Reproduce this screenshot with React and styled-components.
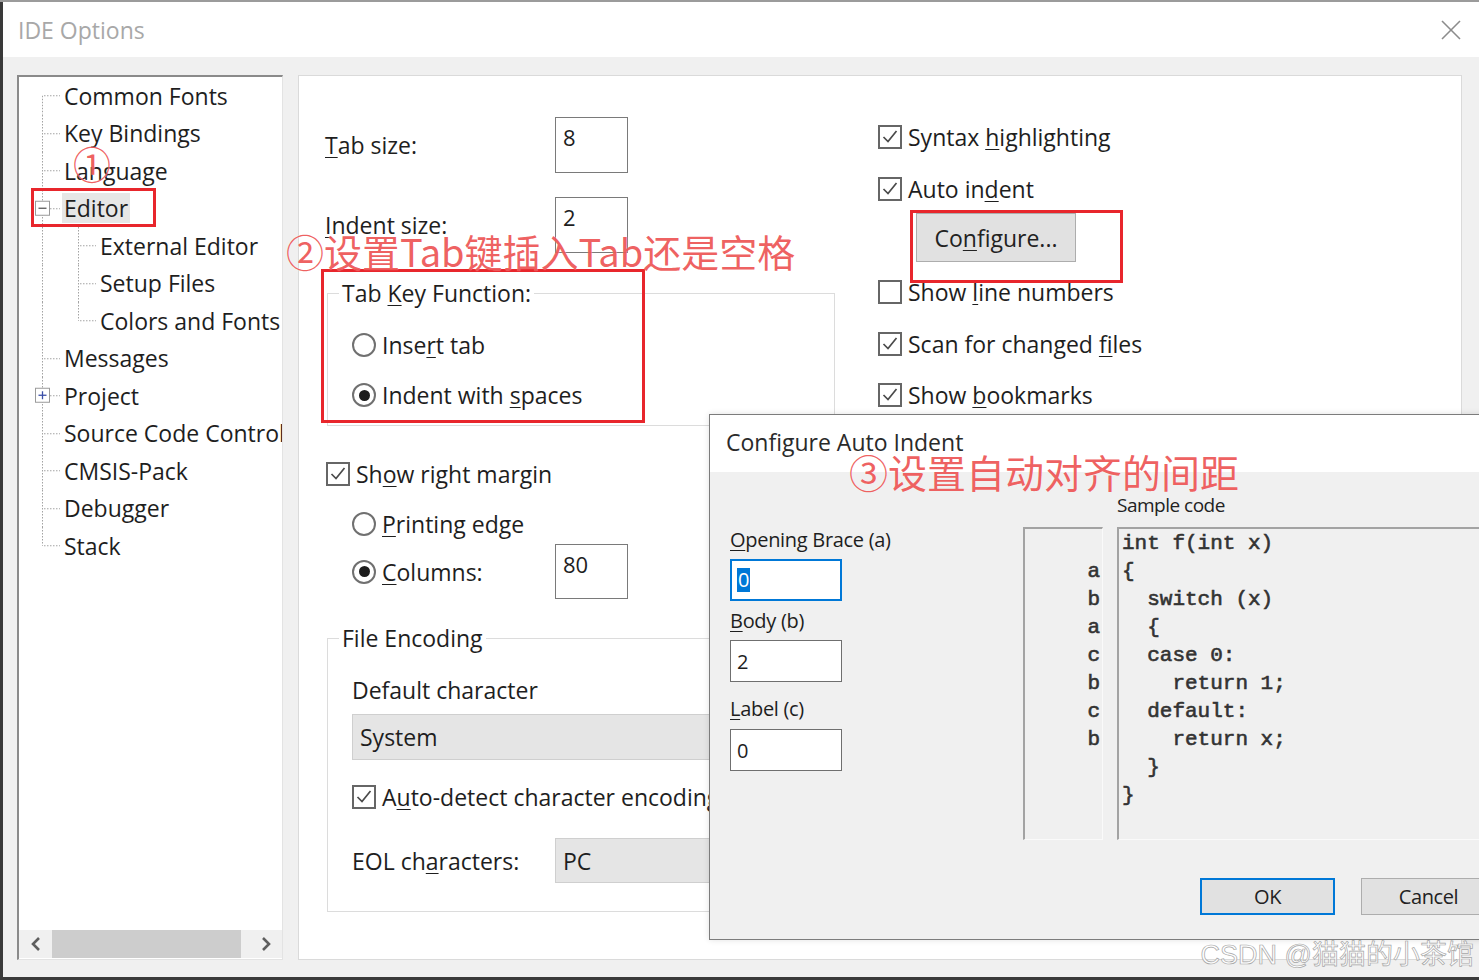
import React from 'react';
import styled, { createGlobalStyle } from 'styled-components';

const GlobalStyle = createGlobalStyle`
  html, body { margin: 0; padding: 0; }
  body {
    font-family: "Open Sans", "Noto Sans", "Noto Sans CJK SC", sans-serif;
    color: #1e1e1e;
    background: #3a3a3a;
  }
  * { box-sizing: border-box; }
`;

const Page = styled.div`
  position: relative;
  width: 1479px;
  height: 980px;
  overflow: hidden;
  background: #3a3a3a;
  border-top: 2px solid #9b9b9b;
  padding: 0 0 3px 3px;
`;

const Window = styled.div`
  height: 100%;
  display: flex;
  flex-direction: column;
  background: #f0f0f0;
`;

const TitleBar = styled.div`
  height: 55px;
  flex: none;
  background: #fff;
  display: flex;
  align-items: center;
  justify-content: space-between;
  padding: 0 17px 0 15px;
`;

const WindowTitle = styled.div`
  font-size: 23px;
  color: #a8a8a8;
`;

const CloseGlyph = styled.svg`
  width: 22px;
  height: 22px;
`;

const Body = styled.div`
  flex: 1;
  display: flex;
  align-items: flex-start;
  gap: 15px;
  padding: 18px 0 0 14px;
`;

/* ---------- tree ---------- */
const TreePanel = styled.div`
  width: 266px;
  height: 885px;
  flex: none;
  background: #fff;
  border-top: 2px solid #8a8a8a;
  border-left: 2px solid #8a8a8a;
  border-right: 1px solid #e3e3e3;
  border-bottom: 1px solid #e3e3e3;
  display: flex;
  flex-direction: column;
`;

const TreeList = styled.div`
  flex: 1;
  overflow: hidden;
`;

const TreeRowBox = styled.div`
  height: 37.5px;
  display: flex;
  align-items: center;
  white-space: nowrap;
  font-size: 23px;
`;

const Connector = styled.svg`
  flex: none;
  height: 37.5px;
`;

const TreeLabel = styled.span`
  line-height: 30px;
  padding: 0 2px;
  margin-left: -2px;
  background: ${(p) => (p.$selected ? '#e6e6e6' : 'transparent')};
`;

const HScroll = styled.div`
  height: 28px;
  margin-bottom: 1px;
  display: flex;
  background: #f0f0f0;
`;

const ScrollArrow = styled.div`
  width: 33px;
  display: flex;
  align-items: center;
  justify-content: center;
`;

const ScrollThumb = styled.div`
  width: 189px;
  background: #cdcdcd;
`;

const ScrollSpacer = styled.div`
  flex: 1;
`;

/* ---------- options panel ---------- */
const OptionsPanel = styled.div`
  width: 1164px;
  height: 885px;
  flex: none;
  background: #fff;
  border: 1px solid #dadada;
  padding-left: 26px;
  display: flex;
  flex-direction: column;
  font-size: 23px;
`;

const Upper = styled.div`
  display: flex;
`;

const LeftCol = styled.div`
  width: 510px;
  display: flex;
  flex-direction: column;
`;

const RightCol = styled.div`
  margin-left: 43px;
  padding-top: 41px;
  display: flex;
  flex-direction: column;
  align-items: flex-start;
`;

const FieldRow = styled.div`
  display: flex;
  align-items: center;
  margin-top: ${(p) => p.$mt || 0}px;
  margin-left: ${(p) => p.$ml || 0}px;
`;

const FieldLabel = styled.div`
  width: ${(p) => p.$w}px;
  flex: none;
  white-space: nowrap;
`;

const NumberBox = styled.div`
  width: 73px;
  height: ${(p) => p.$h || 56}px;
  border: 1px solid #7a7a7a;
  background: #fff;
  padding: 5px 0 0 7px;
  line-height: 28px;
  font-size: 22px;
`;

const GroupBox = styled.fieldset`
  margin: ${(p) => p.$mt}px 0 0 2px;
  width: ${(p) => p.$w}px;
  padding: 0 0 ${(p) => p.$pb}px 24px;
  border: 1px solid #dcdcdc;
  min-width: 0;
  display: flex;
  flex-direction: column;
  align-items: flex-start;
`;

const GroupLegend = styled.legend`
  padding: 0 3px;
  margin-left: -13px;
  line-height: 30px;
  font-size: 23px;
`;

const ChoiceRow = styled.label`
  display: flex;
  align-items: center;
  gap: 6px;
  height: ${(p) => p.$h || 40}px;
  width: ${(p) => (p.$w ? `${p.$w}px` : 'auto')};
  flex: none;
  margin-top: ${(p) => p.$mt || 0}px;
  margin-left: ${(p) => p.$ml || 0}px;
  white-space: nowrap;
`;

const Box = styled.span`
  width: 24px;
  height: 24px;
  flex: none;
  border: 2px solid #666;
  background: #fff;
  display: flex;
  align-items: center;
  justify-content: center;
`;

const RadioRing = styled.span`
  width: 24px;
  height: 24px;
  flex: none;
  border-radius: 50%;
  border: 2px solid #707070;
  background: #fff;
  display: flex;
  align-items: center;
  justify-content: center;
  &::after {
    content: '';
    width: 11px;
    height: 11px;
    border-radius: 50%;
    background: ${(p) => (p.$on ? '#1c1c1c' : 'transparent')};
  }
`;

const Key = styled.span`
  text-decoration: underline;
  text-underline-offset: 3px;
  text-decoration-thickness: 1px;
`;

const PlainLabel = styled.div`
  line-height: 30px;
  margin-top: ${(p) => p.$mt || 0}px;
`;

const Combo = styled.div`
  width: ${(p) => p.$w}px;
  height: ${(p) => p.$h}px;
  margin-top: ${(p) => p.$mt || 0}px;
  background: #e5e5e5;
  border: 1px solid #cfcfcf;
  display: flex;
  align-items: center;
  padding-left: 7px;
`;

const PushButton = styled.div`
  width: 160px;
  height: 49px;
  margin: 4px 0 0 38px;
  background: #e1e1e1;
  border: 1px solid #adadad;
  display: flex;
  align-items: center;
  justify-content: center;
  color: #222;
`;

/* ---------- dialog ---------- */
const Dialog = styled.div`
  position: absolute;
  left: 709px;
  top: 412px;
  width: 810px;
  height: 526px;
  border: 1px solid #7c7c7c;
  background: #f0f0f0;
  display: flex;
  flex-direction: column;
  box-shadow: 0 0 6px rgba(0, 0, 0, 0.12);
  z-index: 2;
`;

const DialogTitle = styled.div`
  height: 57px;
  flex: none;
  background: #fff;
  display: flex;
  align-items: center;
  padding: 0 0 4px 16px;
  font-size: 23px;
  color: #2a2a2a;
`;

const DialogMain = styled.div`
  display: flex;
  padding: 0 22px 0 20px;
`;

const DialogFields = styled.div`
  width: 293px;
  flex: none;
  padding-top: 53px;
  display: flex;
  flex-direction: column;
  font-size: 20px;
`;

const DField = styled.div`
  line-height: 30px;
  margin-top: ${(p) => p.$mt || 0}px;
  letter-spacing: -0.3px;
`;

const DInput = styled.div`
  width: 112px;
  height: 42px;
  margin-top: ${(p) => p.$mt || 0}px;
  background: #fff;
  border: ${(p) => (p.$focus ? '2px solid #0078d7' : '1px solid #6f6f6f')};
  display: flex;
  align-items: center;
  padding-left: ${(p) => (p.$focus ? 5 : 6)}px;
  font-size: 20px;
`;

const Selected = styled.span`
  background: #0078d7;
  color: #fff;
  line-height: 24px;
  padding: 0 1px;
`;

const SampleArea = styled.div`
  flex: 1;
  padding-top: 20px;
  display: flex;
  flex-direction: column;
`;

const SampleLabel = styled.div`
  margin-left: 94px;
  line-height: 26px;
  font-size: 19px;
  letter-spacing: -0.5px;
  color: #222;
`;

const SampleBoxes = styled.div`
  margin-top: 9px;
  display: flex;
  gap: 14px;
  height: 313px;
`;

const Sunken = styled.div`
  border-top: 2px solid #a3a3a3;
  border-left: 2px solid #a3a3a3;
  border-right: 1px solid #fafafa;
  border-bottom: 1px solid #fafafa;
  background: #f0f0f0;
  font-family: "Liberation Mono", "Courier New", monospace;
  font-size: 21px;
  font-weight: normal;
  -webkit-text-stroke: 0.6px #333;
  line-height: 28px;
  color: #333;
  padding-top: 1px;
  white-space: pre;
`;

const Gutter = styled(Sunken)`
  width: 80px;
  flex: none;
  text-align: right;
  padding-right: 2px;
`;

const CodeBox = styled(Sunken)`
  flex: 1;
  padding-left: 3px;
`;

const CodeLine = styled.div`
  height: 28px;
`;

const ButtonRow = styled.div`
  margin-top: 38px;
  display: flex;
  justify-content: flex-end;
  gap: 26px;
  padding-right: 22px;
`;

const DialogButton = styled.div`
  width: 135px;
  height: 37px;
  background: #e1e1e1;
  border: ${(p) => (p.$default ? '2px solid #0078d7' : '1px solid #adadad')};
  display: flex;
  align-items: center;
  justify-content: center;
  font-size: 20px;
  letter-spacing: -0.4px;
  color: #222;
`;

/* ---------- annotations ---------- */
const Mark = styled.div`
  position: absolute;
  left: ${(p) => p.$x}px;
  top: ${(p) => p.$y}px;
  width: ${(p) => p.$w}px;
  height: ${(p) => p.$h}px;
  border: 3px solid #e8262c;
  z-index: 3;
`;

const Note = styled.div`
  position: absolute;
  left: ${(p) => p.$x}px;
  top: ${(p) => p.$y}px;
  font-family: "Noto Sans CJK SC", "Noto Sans", sans-serif;
  font-size: ${(p) => p.$size}px;
  line-height: 1;
  color: rgba(236, 70, 70, 0.85);
  white-space: nowrap;
  z-index: 3;
  text-shadow: 0 0 1px rgba(255, 255, 255, 0.6);
`;

const Watermark = styled.div`
  position: absolute;
  right: 5px;
  top: 936px;
  font-family: "Liberation Sans", "Noto Sans CJK SC", sans-serif;
  font-size: 27px;
  line-height: 34px;
  color: rgba(255, 255, 255, 0.92);
  -webkit-text-stroke: 0.7px #a5a5a5;
  white-space: nowrap;
  z-index: 4;
`;

/* ---------- parts ---------- */
const treeItems = [
  { label: 'Common Fonts', level: 0, first: true },
  { label: 'Key Bindings', level: 0 },
  { label: 'Language', level: 0 },
  { label: 'Editor', level: 0, expander: 'minus', selected: true },
  { label: 'External Editor', level: 1 },
  { label: 'Setup Files', level: 1 },
  { label: 'Colors and Fonts', level: 1, lastChild: true },
  { label: 'Messages', level: 0 },
  { label: 'Project', level: 0, expander: 'plus' },
  { label: 'Source Code Control', level: 0 },
  { label: 'CMSIS-Pack', level: 0 },
  { label: 'Debugger', level: 0 },
  { label: 'Stack', level: 0, last: true },
];

const LINE = '#a3a3a3';
const DASH = '1.5 1.5';

function TreeRow({ item }) {
  const h = 37.5;
  const c = h / 2;
  const w = item.level === 0 ? 45 : 81;
  return (
    <TreeRowBox>
      <Connector width={w} viewBox={`0 0 ${w} ${h}`}>
        <line
          x1="23.5"
          x2="23.5"
          y1={item.first ? c : 0}
          y2={item.last ? c : h}
          stroke={LINE}
          strokeDasharray={DASH}
        />
        {item.level === 0 && (
          <line
            x1={item.expander ? 31 : 25}
            x2="41"
            y1={c}
            y2={c}
            stroke={LINE}
            strokeDasharray={DASH}
          />
        )}
        {item.level === 1 && (
          <>
            <line x1="59.5" x2="59.5" y1="0" y2={item.lastChild ? c : h} stroke={LINE} strokeDasharray={DASH} />
            <line x1="61" x2="77" y1={c} y2={c} stroke={LINE} strokeDasharray={DASH} />
          </>
        )}
        {item.expander === 'minus' && (
          <line x1="59.5" x2="59.5" y1={c + 8} y2={h} stroke={LINE} strokeDasharray={DASH} />
        )}
        {item.expander && (
          <>
            <rect x="16.5" y={c - 7.5} width="14" height="14" fill="#fff" stroke="#9a9a9a" strokeWidth="1" />
            <line x1="19.5" x2="27.5" y1={c - 0.5} y2={c - 0.5} stroke={item.expander === 'plus' ? '#3b4fa8' : '#5a5a5a'} strokeWidth="1.3" />
            {item.expander === 'plus' && (
              <line x1="23.5" x2="23.5" y1={c - 4.5} y2={c + 3.5} stroke="#3b4fa8" strokeWidth="1.3" />
            )}
          </>
        )}
      </Connector>
      <TreeLabel $selected={item.selected}>{item.label}</TreeLabel>
    </TreeRowBox>
  );
}

function Chevron({ dir }) {
  return (
    <svg width="12" height="16" viewBox="0 0 12 16">
      <polyline
        points={dir === 'left' ? '9,2 3,8 9,14' : '3,2 9,8 3,14'}
        fill="none"
        stroke="#5e5e5e"
        strokeWidth="2.6"
      />
    </svg>
  );
}

function Check({ on, children, ...rest }) {
  return (
    <ChoiceRow {...rest}>
      <Box>
        {on && (
          <svg width="18" height="18" viewBox="0 0 18 18">
            <polyline points="2.5,9 7,13.5 15.5,3" fill="none" stroke="#4a4a4a" strokeWidth="1.7" />
          </svg>
        )}
      </Box>
      <span>{children}</span>
    </ChoiceRow>
  );
}

function Radio({ on, children, ...rest }) {
  return (
    <ChoiceRow {...rest}>
      <RadioRing $on={on} />
      <span>{children}</span>
    </ChoiceRow>
  );
}

const gutter = ['', 'a', 'b', 'a', 'c', 'b', 'c', 'b'];
const code = [
  'int f(int x)',
  '{',
  '  switch (x)',
  '  {',
  '  case 0:',
  '    return 1;',
  '  default:',
  '    return x;',
  '  }',
  '}',
];

export default function App() {
  return (
    <>
      <GlobalStyle />
      <Page>
        <Window>
          <TitleBar>
            <WindowTitle>IDE Options</WindowTitle>
            <CloseGlyph viewBox="0 0 22 22">
              <line x1="2" y1="2" x2="20" y2="20" stroke="#8c8c8c" strokeWidth="1.6" />
              <line x1="20" y1="2" x2="2" y2="20" stroke="#8c8c8c" strokeWidth="1.6" />
            </CloseGlyph>
          </TitleBar>
          <Body>
            <TreePanel>
              <TreeList>
                {treeItems.map((it) => (
                  <TreeRow key={it.label} item={it} />
                ))}
              </TreeList>
              <HScroll>
                <ScrollArrow>
                  <Chevron dir="left" />
                </ScrollArrow>
                <ScrollThumb />
                <ScrollSpacer />
                <ScrollArrow>
                  <Chevron dir="right" />
                </ScrollArrow>
              </HScroll>
            </TreePanel>

            <OptionsPanel>
              <Upper>
                <LeftCol>
                  <FieldRow $mt={41}>
                    <FieldLabel $w={230}>
                      <Key>T</Key>ab size:
                    </FieldLabel>
                    <NumberBox>8</NumberBox>
                  </FieldRow>
                  <FieldRow $mt={24}>
                    <FieldLabel $w={230}>
                      <Key>I</Key>ndent size:
                    </FieldLabel>
                    <NumberBox>2</NumberBox>
                  </FieldRow>
                  <GroupBox $mt={25} $w={508} $pb={5}>
                    <GroupLegend>
                      Tab <Key>K</Key>ey Function:
                    </GroupLegend>
                    <Radio $h={50} $mt={12}>
                      Inse<Key>r</Key>t tab
                    </Radio>
                    <Radio $h={50} on>
                      Indent with <Key>s</Key>paces
                    </Radio>
                  </GroupBox>
                  <Check on $mt={28} $ml={1}>
                    Sh<Key>o</Key>w right margin
                  </Check>
                  <Radio $mt={10} $ml={27}>
                    <Key>P</Key>rinting edge
                  </Radio>
                  <FieldRow $ml={27}>
                    <Radio on $w={203} $h={55}>
                      <Key>C</Key>olumns:
                    </Radio>
                    <NumberBox $h={55}>80</NumberBox>
                  </FieldRow>
                </LeftCol>

                <RightCol>
                  <Check on>
                    Syntax <Key>h</Key>ighlighting
                  </Check>
                  <Check on $mt={12}>
                    Auto in<Key>d</Key>ent
                  </Check>
                  <PushButton>
                    Co<Key>n</Key>figure...
                  </PushButton>
                  <Check $mt={10}>
                    Show <Key>l</Key>ine numbers
                  </Check>
                  <Check on $mt={12}>
                    Scan for changed <Key>f</Key>iles
                  </Check>
                  <Check on $mt={11}>
                    Show <Key>b</Key>ookmarks
                  </Check>
                </RightCol>
              </Upper>

              <GroupBox $mt={24} $w={1108} $pb={28}>
                <GroupLegend>File Encoding</GroupLegend>
                <PlainLabel $mt={22}>Default character</PlainLabel>
                <Combo $w={600} $h={46} $mt={9}>
                  System
                </Combo>
                <Check on $mt={17}>
                  A<Key>u</Key>to-detect character encoding
                </Check>
                <FieldRow $mt={21}>
                  <FieldLabel $w={203}>
                    EOL ch<Key>a</Key>racters:
                  </FieldLabel>
                  <Combo $w={400} $h={45}>
                    PC
                  </Combo>
                </FieldRow>
              </GroupBox>
            </OptionsPanel>
          </Body>
        </Window>

        <Dialog>
          <DialogTitle>Configure Auto Indent</DialogTitle>
          <DialogMain>
            <DialogFields>
              <DField>
                <Key>O</Key>pening Brace (a)
              </DField>
              <DInput $focus $mt={4}>
                <Selected>0</Selected>
              </DInput>
              <DField $mt={5}>
                <Key>B</Key>ody (b)
              </DField>
              <DInput $mt={4}>2</DInput>
              <DField $mt={12}>
                <Key>L</Key>abel (c)
              </DField>
              <DInput $mt={5}>0</DInput>
            </DialogFields>
            <SampleArea>
              <SampleLabel>Sample code</SampleLabel>
              <SampleBoxes>
                <Gutter>
                  {gutter.map((g, i) => (
                    <CodeLine key={i}>{g}</CodeLine>
                  ))}
                </Gutter>
                <CodeBox>
                  {code.map((l, i) => (
                    <CodeLine key={i}>{l}</CodeLine>
                  ))}
                </CodeBox>
              </SampleBoxes>
            </SampleArea>
          </DialogMain>
          <ButtonRow>
            <DialogButton $default>OK</DialogButton>
            <DialogButton>Cancel</DialogButton>
          </ButtonRow>
        </Dialog>

        <Mark $x={31} $y={186} $w={125} $h={39} />
        <Mark $x={321} $y={267} $w={324} $h={154} />
        <Mark $x={910} $y={208} $w={213} $h={73} />
        <Note $x={73} $y={142} $size={38}>①</Note>
        <Note $x={286} $y={230} $size={38}>②设置Tab键插入Tab还是空格</Note>
        <Note $x={849} $y={450} $size={39}>③设置自动对齐的间距</Note>
        <Watermark>CSDN @猫猫的小茶馆</Watermark>
      </Page>
    </>
  );
}
